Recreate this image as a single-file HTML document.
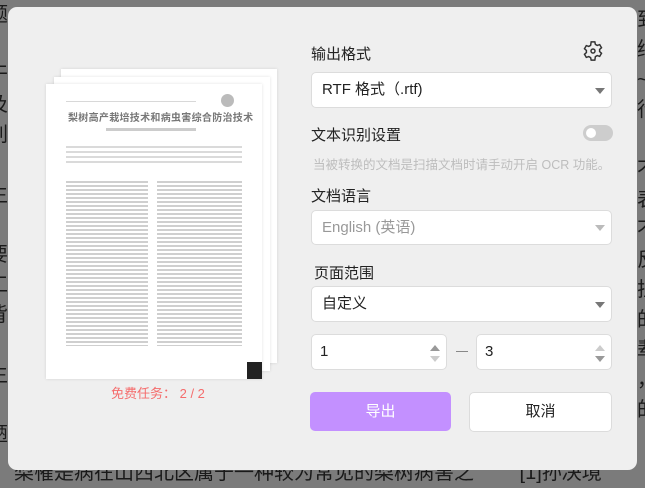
<!DOCTYPE html>
<html><head><meta charset="utf-8"><style>
*{box-sizing:border-box;margin:0;padding:0}
body{width:645px;height:478px;overflow:hidden;background:#7b7b7b;font-family:"Liberation Sans","Noto Sans CJK SC",sans-serif;position:relative;color:#222}
.bg{position:absolute;color:#1a1a1a;font-size:20px;line-height:30px}
.modal{position:absolute;left:8px;top:7px;width:629px;height:463px;background:#efefef;border-radius:9px}
.a{position:absolute}
.pg{position:absolute;background:#fff;box-shadow:0 0 3px rgba(0,0,0,.12)}
.lbl{position:absolute;left:303px;font-size:15px;color:#222}
.sel{position:absolute;left:303px;width:301px;background:#fff;border:1px solid #dcdcdc;border-radius:5px;font-size:15px;padding-left:10px}
.tri{position:absolute;right:6px;width:0;height:0;border-left:5px solid transparent;border-right:5px solid transparent;border-top:6px solid #777}
.ln{position:absolute;height:2px;background:#d8d8d8}
</style></head><body>
<div class="bg" style="left:-12px;top:0">题<br>，<br>干<br>及<br>刺<br>，<br>生<br>。<br>要<br>工<br>背<br>，<br>生<br>0<br>陋</div>
<div class="bg" style="left:637px;top:5px">到<br>纲<br>~<br>行<br>&nbsp;<br>不<br>表<br>不<br>反<br>拉<br>的<br>辈<br>，<br>的</div>
<div class="bg" style="left:14px;top:458px;white-space:nowrap">梨罹是病在山西北区属于一种较为常见的梨树病害之 　　[1]孙决境</div>
<div class="modal">
 <div class="pg" style="left:53px;top:62px;width:216px;height:294px"></div>
 <div class="pg" style="left:46px;top:70px;width:216px;height:294px"></div>
 <div class="pg" style="left:38px;top:77px;width:216px;height:295px">
  <div class="ln" style="left:20px;top:17px;width:130px;height:1px"></div>
  <div class="a" style="left:175px;top:10px;width:13px;height:13px;border-radius:50%;background:#bbb"></div>
  <div class="a" style="left:22px;top:25px;font-size:10px;color:#777;white-space:nowrap;font-weight:bold;letter-spacing:.3px">梨树高产栽培技术和病虫害综合防治技术</div>
  <div class="ln" style="left:60px;top:44px;width:90px;height:3px;background:#ccc"></div>
  <div class="ln" style="left:20px;top:62px;width:176px;height:18px;background:repeating-linear-gradient(#dadada 0 2px,transparent 2px 5px)"></div>
  <div class="ln" style="left:20px;top:97px;width:82px;height:165px;background:repeating-linear-gradient(#cfcfcf 0 2px,transparent 2px 4px)"></div>
  <div class="ln" style="left:111px;top:97px;width:85px;height:165px;background:repeating-linear-gradient(#cfcfcf 0 2px,transparent 2px 4px)"></div>
  <div class="a" style="right:0;bottom:0;width:15px;height:17px;background:#222"></div>
 </div>
 <div class="a" style="left:103px;top:376px;font-size:13px;color:#f56c6c">免费任务： 2 / 2</div>

 <div class="lbl" style="top:36px">输出格式</div>
 <svg class="a" style="left:574px;top:33px" width="22" height="22" viewBox="0 0 24 24" fill="none" stroke="#333" stroke-width="1.6"><path d="M10 2h4l.6 2.8 2 1.1 2.7-.9 2 3.4-2.1 1.9v2.3l2.1 1.9-2 3.4-2.7-.9-2 1.1L14 22h-4l-.6-2.8-2-1.1-2.7.9-2-3.4 2.1-1.9v-2.3L2.7 9.5l2-3.4 2.7.9 2-1.1z"/><circle cx="12" cy="12" r="2.2"/></svg>
 <div class="sel" style="top:65px;height:36px;line-height:34px">RTF 格式（.rtf)<div class="tri" style="top:15px"></div></div>
 <div class="lbl" style="top:117px">文本识别设置</div>
 <div class="a" style="left:575px;top:118px;width:30px;height:16px;border-radius:8px;background:#cdcdcd"><div class="a" style="left:3px;top:3px;width:10px;height:10px;border-radius:50%;background:#fff"></div></div>
 <div class="a" style="left:305px;top:147px;font-size:12.5px;color:#bdbdbd;white-space:nowrap">当被转换的文档是扫描文档时请手动开启 OCR 功能。</div>
 <div class="lbl" style="top:178px">文档语言</div>
 <div class="sel" style="top:203px;height:35px;line-height:33px;color:#999">English (英语)<div class="tri" style="top:14px;border-top-color:#bbb"></div></div>
 <div class="lbl" style="top:255px;left:306px">页面范围</div>
 <div class="sel" style="top:279px;height:36px;line-height:34px">自定义<div class="tri" style="top:15px"></div></div>
 <div class="sel" style="top:327px;width:136px;height:36px;line-height:34px;padding-left:8px">1<div class="tri" style="top:10px;border-top:0;border-bottom:6px solid #999"></div><div class="tri" style="top:21px;border-top-color:#ccc"></div></div>
 <div class="a" style="left:448px;top:344px;width:12px;height:1px;background:#888"></div>
 <div class="sel" style="left:468px;top:327px;width:136px;height:36px;line-height:34px;padding-left:8px">3<div class="tri" style="top:10px;border-top:0;border-bottom:6px solid #ccc"></div><div class="tri" style="top:21px;border-top-color:#999"></div></div>
 <div class="a" style="left:302px;top:385px;width:141px;height:39px;border-radius:5px;background:#c390ff;color:#fff;font-size:15px;text-align:center;line-height:39px">导出</div>
 <div class="a" style="left:461px;top:385px;width:143px;height:40px;border-radius:5px;background:#fff;border:1px solid #dcdcdc;font-size:15px;text-align:center;line-height:38px">取消</div>
</div>
</body></html>
